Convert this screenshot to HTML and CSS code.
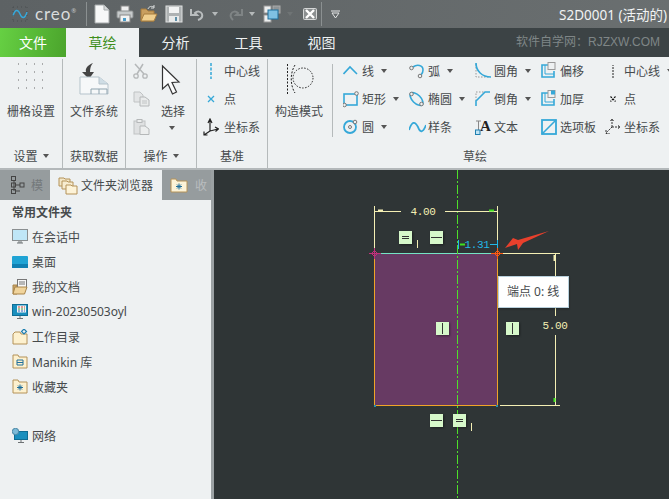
FILE: index.html
```html
<!DOCTYPE html>
<html lang="zh-CN">
<head>
  <meta charset="UTF-8">
  <title>S2D0001 (活动的)</title>
  <link rel="stylesheet" href="styles.css">
</head>
<body>

  <!-- 标题栏 -->
  <div class="titlebar">
    <div class="logo">
      <svg class="logo-wave" viewBox="0 0 16 16">
        <path d="M1 10C3 3 6 3 8 8S13 13 15 6" fill="none" stroke="#35a9dc" stroke-width="1.4"/>
        <path d="M1 1H15M1 15H15M1 1V15M15 1V15" fill="none" stroke="#4a4f51" stroke-dasharray="1 3"/>
      </svg>
      <span class="logo-text">creo</span><span class="logo-mark">®</span>
    </div>
    <div class="bar-sep"></div>
    <svg class="qa" width="16" height="20" viewBox="0 0 16 20"><path d="M1 1H10L15 6V19H1Z" fill="#f7f8f8" stroke="#a5a9aa"/><path d="M10 1V6H15" fill="#d5d8d9" stroke="#a5a9aa"/></svg>
    <svg class="qa" width="18" height="18" viewBox="0 0 18 18"><rect x="5" y="1" width="8" height="6" fill="#eee" stroke="#888"/><rect x="1" y="6" width="16" height="7" rx="1" fill="#c6cacb" stroke="#8b8f90"/><rect x="4" y="10" width="10" height="7" fill="#f2f3f3" stroke="#888"/><rect x="7" y="13" width="3" height="3" fill="#4b9cc8"/></svg>
    <svg class="qa" width="18" height="18" viewBox="0 0 18 18"><path d="M1 4H6L8 6H14V16H1Z" fill="#c99f5f" stroke="#a67c3e"/><path d="M4 9H17L14 16H1Z" fill="#f0cf8e" stroke="#a67c3e"/><path d="M8 4C9 1 12 1 14 2M14 0V3H11" fill="none" stroke="#d9dcdc"/></svg>
    <svg class="qa ml1" width="18" height="18" viewBox="0 0 18 18"><rect x="1" y="1" width="16" height="16" fill="#aeb2b3" stroke="#dfe1e1"/><rect x="4" y="2" width="10" height="6" fill="#f2f3f3"/><rect x="4" y="11" width="10" height="6" fill="#e8eaea"/><rect x="10" y="12" width="2" height="4" fill="#5e8fa8"/></svg>
    <svg class="qa" width="17" height="16" viewBox="0 0 17 16"><path d="M2 3V9H8L6 7C8 5 12 5 13 8C14 11 12 13 9 14" fill="none" stroke="#b9bdbe" stroke-width="2"/></svg>
    <span class="caret caret-light"></span>
    <svg class="qa ml3" width="16" height="16" viewBox="0 0 16 16"><path d="M15 3V9H9L11 7C9 5 5 5 4 8C3 10 4 12 6 14" fill="none" stroke="#7f8485" stroke-width="2"/></svg>
    <span class="caret caret-light"></span>
    <svg class="qa ml2" width="18" height="18" viewBox="0 0 18 18"><rect x="1" y="1" width="7" height="7" fill="#eceeee" stroke="#999"/><rect x="10" y="1" width="7" height="7" fill="#8f9496" stroke="#aaa"/><rect x="1" y="10" width="7" height="7" fill="#eceeee" stroke="#999"/><rect x="5" y="5" width="10" height="9" fill="#7fc0e2" stroke="#1f6f9c"/></svg>
    <span class="caret caret-dim"></span>
    <svg class="qa ml4" width="14" height="14" viewBox="0 0 14 14"><rect x="0.5" y="1.5" width="13" height="11" rx="1" fill="#8b8f90" stroke="#d5d7d7"/><path d="M3 3L11 11M11 3L3 11" stroke="#fff" stroke-width="2.4"/></svg>
    <div class="bar-sep sep-end"></div>
    <svg class="customize" width="9" height="9" viewBox="0 0 9 9"><path d="M0 1H9" stroke="#e4e6e6"/><path d="M1 3H8L4.500 8Z" fill="none" stroke="#e4e6e6"/></svg>
    <div class="doc-title">S2D0001 (活动的)</div>
  </div>

  <!-- 选项卡 -->
  <div class="tabs">
    <div class="tab tab-file">文件</div>
    <div class="tab tab-active">草绘</div>
    <div class="tab">分析</div>
    <div class="tab">工具</div>
    <div class="tab">视图</div>
    <div class="tabs-note">软件自学网：RJZXW.COM</div>
  </div>

  <!-- 功能区 -->
  <div class="ribbon">

    <div class="group group-setup">
      <div class="big">
        <div class="big-slot">
          <svg width="30" height="30" viewBox="0 0 30 30">
            <path d="M2 2H28M2 10H28M2 18H28M2 26H28" stroke="#666" stroke-dasharray="1 7" fill="none"/>
          </svg>
        </div>
        <span>栅格设置</span>
      </div>
      <div class="group-label">设置<span class="caret"></span></div>
    </div>

    <div class="group group-data">
      <div class="big">
        <div class="big-slot">
          <svg width="30" height="36" viewBox="0 0 30 36">
            <path d="M14 1C9 3 6 6 7 10H3L10 17L15 10H11C11 6 12 3 14 1Z" fill="#444"/>
            <path d="M1 15H20L29 22V32H1Z" fill="#f6f8f9" stroke="#b5c3cb"/>
            <path d="M20 15V22H29" fill="#cfdde5" stroke="#b5c3cb"/>
            <path d="M12 32V27H28V32M20 27V32" fill="none" stroke="#8ea3ae"/>
          </svg>
        </div>
        <span>文件系统</span>
      </div>
      <div class="group-label">获取数据</div>
    </div>

    <div class="group group-ops">
      <div class="ops-row">
        <div class="ops-icons">
          <svg width="15" height="16" viewBox="0 0 15 16"><path d="M2 1L11 11M10 1L4 11" stroke="#b5b8b9" stroke-width="1.500" fill="none"/><circle cx="3" cy="13" r="2.200" fill="none" stroke="#b5b8b9" stroke-width="1.300"/><circle cx="12" cy="13" r="2.200" fill="none" stroke="#b5b8b9" stroke-width="1.300"/></svg>
          <svg width="17" height="16" viewBox="0 0 17 16"><path d="M1 1H7L10 4V11H1Z" fill="#e3e5e6" stroke="#c0c3c4"/><path d="M7 6H12L16 9V15H7Z" fill="#e9ebeb" stroke="#b5b8b9"/><path d="M9 10H14M9 12H14" stroke="#c0c3c4"/></svg>
          <svg width="17" height="16" viewBox="0 0 17 16"><rect x="1" y="2" width="11" height="13" fill="#dfe1e2" stroke="#c0c3c4"/><rect x="4" y="0.500" width="5" height="3" fill="#eceeee" stroke="#b5b8b9"/><path d="M7 7H12L16 10V15.500H7Z" fill="#eceeee" stroke="#b5b8b9"/></svg>
        </div>
        <div class="big big-select">
          <div class="big-slot">
            <svg width="24" height="34" viewBox="0 0 24 34">
              <path d="M1.500 4L1.500 27L7 22L11.500 32L15.500 30L11 20.500L18 20Z" fill="#fafbfb" stroke="#333" stroke-width="1.200"/>
            </svg>
          </div>
          <span>选择</span>
          <span class="caret caret-select"></span>
        </div>
      </div>
      <div class="group-label">操作<span class="caret"></span></div>
    </div>

    <div class="group group-datum">
      <div class="rows">
        <div class="row">
          <svg width="16" height="16" viewBox="0 0 16 16"><path d="M8 0V16" stroke="#35a8d8" stroke-width="1.500" stroke-dasharray="3 1.500"/></svg>
          <span>中心线</span>
        </div>
        <div class="row">
          <svg width="16" height="16" viewBox="0 0 16 16"><path d="M5 5L11 11M11 5L5 11" stroke="#35a8d8" stroke-width="1.300"/></svg>
          <span>点</span>
        </div>
        <div class="row">
          <svg width="16" height="18" viewBox="0 0 16 18"><path d="M7 13V2M5 5L7 1L9 5M7 13L15 11M12 9L15.500 11L12.500 13.500M7 13L1 17M1 13.500V17H4.500" fill="none" stroke="#222" stroke-width="1.200"/></svg>
          <span>坐标系</span>
        </div>
      </div>
      <div class="group-label">基准</div>
    </div>

    <div class="group group-sketch">
      <div class="sketch-body">
        <div class="big big-mode">
          <div class="big-slot">
            <svg width="28" height="30" viewBox="0 0 28 30">
              <path d="M1.500 0V30" stroke="#222" stroke-dasharray="2 1.500"/>
              <path d="M9 1C4 9 4 21 9 29" fill="none" stroke="#222" stroke-dasharray="2 1.500"/>
              <circle cx="17" cy="14" r="10" fill="none" stroke="#222" stroke-dasharray="1.500 1.500"/>
            </svg>
          </div>
          <span>构造模式</span>
        </div>
        <div class="tools">
          <div class="row">
            <svg width="17" height="18" viewBox="0 0 17 18"><path d="M0.500 12L7 5L14 12" fill="none" stroke="#35a8d8" stroke-width="1.600"/></svg>
            <span>线</span><span class="caret"></span>
          </div>
          <div class="row">
            <svg width="17" height="18" viewBox="0 0 17 18"><path d="M4 5C8 2 14 3 14 8C14 10 13 12 12 13" fill="none" stroke="#35a8d8" stroke-width="1.600"/><circle cx="2.500" cy="6" r="1.800" fill="#eef1f2" stroke="#777"/><circle cx="11" cy="14" r="1.800" fill="#eef1f2" stroke="#777"/></svg>
            <span>弧</span><span class="caret"></span>
          </div>
          <div class="row">
            <svg width="17" height="18" viewBox="0 0 17 18"><path d="M1 2V15H15" fill="none" stroke="#999" stroke-dasharray="1.500 1.500"/><path d="M1 1C1 9 7 15 16 15" fill="none" stroke="#35a8d8" stroke-width="1.700"/></svg>
            <span>圆角</span><span class="caret"></span>
          </div>
          <div class="row">
            <svg width="17" height="18" viewBox="0 0 17 18"><path d="M7 3H1V15H13V9" fill="none" stroke="#35a8d8" stroke-width="1.600"/><path d="M4 3V12H13" fill="none" stroke="#35a8d8"/><rect x="7" y="0.500" width="7" height="7" fill="#eef1f2" stroke="#999"/></svg>
            <span>偏移</span>
          </div>
          <div class="row">
            <svg width="17" height="18" viewBox="0 0 17 18"><path d="M1 14V1" stroke="#222" stroke-dasharray="2 1" transform="translate(7 2)"/></svg>
            <span>中心线</span><span class="caret"></span>
          </div>

          <div class="row">
            <svg width="17" height="18" viewBox="0 0 17 18"><rect x="1" y="4" width="13" height="11" fill="none" stroke="#35a8d8" stroke-width="1.600"/><circle cx="13.500" cy="3.500" r="1.800" fill="#eef1f2" stroke="#777"/><circle cx="1.500" cy="15" r="1.800" fill="#eef1f2" stroke="#777"/></svg>
            <span>矩形</span><span class="caret"></span>
          </div>
          <div class="row">
            <svg width="17" height="18" viewBox="0 0 17 18"><ellipse cx="7.500" cy="9" rx="8" ry="4.200" transform="rotate(45 7.500 9)" fill="none" stroke="#35a8d8" stroke-width="1.600"/><circle cx="2.500" cy="4" r="1.800" fill="#eef1f2" stroke="#777"/><circle cx="12.500" cy="14" r="1.800" fill="#eef1f2" stroke="#777"/></svg>
            <span>椭圆</span><span class="caret"></span>
          </div>
          <div class="row">
            <svg width="17" height="18" viewBox="0 0 17 18"><path d="M1 11V2H10" fill="none" stroke="#999" stroke-dasharray="1.500 1.500"/><path d="M1 16V11L10 2H15" fill="none" stroke="#35a8d8" stroke-width="1.600"/></svg>
            <span>倒角</span><span class="caret"></span>
          </div>
          <div class="row">
            <svg width="17" height="18" viewBox="0 0 17 18"><path d="M7 3H1V15H13V9" fill="none" stroke="#35a8d8" stroke-width="1.600"/><path d="M4 3V12H13" fill="none" stroke="#35a8d8"/><rect x="7" y="0.500" width="7" height="7" fill="#eef1f2" stroke="#999"/><rect x="10" y="0.500" width="4" height="4" fill="#35a8d8"/></svg>
            <span>加厚</span>
          </div>
          <div class="row">
            <svg width="17" height="18" viewBox="0 0 17 18"><path d="M5.500 6.500L10.500 11.500M10.500 6.500L5.500 11.500" stroke="#111" stroke-width="1.200" stroke-dasharray="2 1"/></svg>
            <span>点</span>
          </div>

          <div class="row">
            <svg width="17" height="18" viewBox="0 0 17 18"><circle cx="7" cy="9" r="6" fill="none" stroke="#35a8d8" stroke-width="1.800"/><circle cx="7" cy="9" r="1.500" fill="#eef1f2" stroke="#777"/><circle cx="12" cy="4" r="1.800" fill="#eef1f2" stroke="#777"/></svg>
            <span>圆</span><span class="caret"></span>
          </div>
          <div class="row">
            <svg width="17" height="18" viewBox="0 0 17 18"><path d="M0 12C3 3 6 3 9 9C11 15 14 15 17 7" fill="none" stroke="#35a8d8" stroke-width="1.800"/></svg>
            <span>样条</span>
          </div>
          <div class="row">
            <svg width="17" height="18" viewBox="0 0 17 18"><path d="M1 3H6M3.500 3V12" stroke="#888"/><text class="icon-a" x="5" y="13">A</text><rect x="0.500" y="12" width="4.500" height="4.500" fill="#bfe4f5" stroke="#1f7fb0"/></svg>
            <span>文本</span>
          </div>
          <div class="row">
            <svg width="17" height="18" viewBox="0 0 17 18"><rect x="1" y="2" width="14" height="14" fill="none" stroke="#35a8d8" stroke-width="1.800"/><path d="M1 16L15 2" stroke="#35a8d8" stroke-width="1.600"/></svg>
            <span>选项板</span>
          </div>
          <div class="row">
            <svg width="17" height="18" viewBox="0 0 17 18"><path d="M7 9V1M5.500 3L7 1L8.500 3M7 9H15M13 7.500L15 9L13 10.500M7 9L1 15M1 12V15.500H4.500" fill="none" stroke="#333" stroke-dasharray="2 1"/></svg>
            <span>坐标系</span>
          </div>
        </div>
      </div>
      <div class="group-label">草绘</div>
    </div>
  </div>

  <!-- 主区域 -->
  <div class="main">
    <div class="sidebar">
      <div class="side-tabs">
        <div class="side-tab side-tab-model">
          <svg width="14" height="19" viewBox="0 0 14 19"><path d="M3 5V15M5 9H9M5 15H9" stroke="#444"/><rect x="0.500" y="0.500" width="4" height="4" fill="none" stroke="#444"/><rect x="0.500" y="7" width="4" height="4" fill="none" stroke="#444"/><rect x="0.500" y="13.500" width="4" height="4" fill="none" stroke="#444"/><rect x="9" y="7" width="4" height="4" fill="none" stroke="#444"/></svg>
          <span>模</span>
        </div>
        <div class="side-tab side-tab-active">
          <svg width="20" height="19" viewBox="0 0 20 19"><path d="M1 2H6L7 3H12V10H1Z" fill="#f3e7c8" stroke="#b49258"/><path d="M4 5H9L10 6H15V13H4Z" fill="#f7ecd0" stroke="#b49258"/><path d="M8 9H13L14 10H19V18H8Z" fill="#fdf3d8" stroke="#b49258"/></svg>
          <span>文件夹浏览器</span>
        </div>
        <div class="side-tab side-tab-fav">
          <svg width="18" height="15" viewBox="0 0 18 15"><path d="M1 1H6L7 3H17V14H1Z" fill="#fdf3d8" stroke="#b49258"/><path d="M6 8.500H12M9 5.500V11.500M7 6.500L11 10.500M11 6.500L7 10.500" stroke="#1f6f9c"/></svg>
          <span>收</span>
        </div>
      </div>
      <div class="side-list">
        <div class="side-title">常用文件夹</div>
        <div class="side-row">
          <svg width="16" height="15" viewBox="0 0 16 15"><rect x="0.500" y="0.500" width="15" height="11" fill="#bfe6f7" stroke="#8a8f91"/><path d="M5 14H11M7 12V14M9 12V14" stroke="#6d7274"/></svg>
          <span>在会话中</span>
        </div>
        <div class="side-row">
          <svg width="16" height="12" viewBox="0 0 16 12"><rect width="16" height="12" rx="1" fill="#1fa3d4"/><rect y="8" width="16" height="4" fill="#0f7fb2"/></svg>
          <span>桌面</span>
        </div>
        <div class="side-row">
          <svg width="16" height="16" viewBox="0 0 16 16"><path d="M1 6H5V15H1Z" fill="#c9a468" stroke="#a9854a"/><rect x="5.500" y="0.500" width="9" height="9" fill="#f7f7f7" stroke="#777"/><path d="M7 3H13M7 5H13" stroke="#777"/><path d="M3 8H15L12.500 15H1Z" fill="#f0d49c" stroke="#a9854a"/></svg>
          <span>我的文档</span>
        </div>
        <div class="side-row">
          <svg width="16" height="16" viewBox="0 0 16 16"><rect x="0.500" y="0.500" width="15" height="11" fill="#1a8fbe" stroke="#0f6d94"/><rect x="5" y="1.500" width="9" height="7" fill="#f3f3f3"/><path d="M6 3H8M9 3H11M12 3H13" stroke="#d04030"/><path d="M6 5H8M9 5H11M12 5H13" stroke="#3f9a3f"/><path d="M6 7H8M9 7H11M12 7H13" stroke="#3060c0"/><path d="M5 14.500H11M8 12V14" stroke="#6d7274"/></svg>
          <span>win-20230503oyl</span>
        </div>
        <div class="side-row">
          <svg width="16" height="16" viewBox="0 0 16 16"><path d="M1 5V15H15V5H9L8 3H3Z" fill="#fdf1cf" stroke="#b49258"/><path d="M12 0L14.500 2.500L12 5L9.500 2.500Z" fill="#eef1f2" stroke="#1f7fb0" stroke-width="1.200"/></svg>
          <span>工作目录</span>
        </div>
        <div class="side-row">
          <svg width="16" height="15" viewBox="0 0 16 15"><path d="M1 1H6L7 3H15V14H1Z" fill="#fdf1cf" stroke="#b49258"/><path d="M5 6H11V11H5ZM5 8.500H11" fill="none" stroke="#1f6f9c"/></svg>
          <span>Manikin 库</span>
        </div>
        <div class="side-row">
          <svg width="16" height="15" viewBox="0 0 16 15"><path d="M1 1H6L7 3H15V14H1Z" fill="#fdf1cf" stroke="#b49258"/><path d="M5 8.500H11M8 5.500V11.500M6 6.500L10 10.500M10 6.500L6 10.500" stroke="#1f6f9c"/></svg>
          <span>收藏夹</span>
        </div>
        <div class="side-row side-row-net">
          <svg width="16" height="16" viewBox="0 0 16 16"><rect x="2.500" y="3.500" width="13" height="8" fill="#1a8fbe" stroke="#0f6d94"/><path d="M6 14.500H12M9 12V14" stroke="#6d7274"/><circle cx="3.500" cy="3.500" r="3.200" fill="#7dbbd8" stroke="#4b87a5"/></svg>
          <span>网络</span>
        </div>
      </div>
    </div>
    <div class="side-strip"></div>

    <div class="canvas">
      <svg class="drawing" viewBox="214 170 455 329" width="455" height="329">
        <rect class="part" x="375" y="253.500" width="122" height="152"/>

        <path class="edge-orange" d="M374.500 253V405.500H497.500V253"/>
        <path class="edge-top" d="M378 253.500H494"/>
        <path class="center" d="M457.500 170V499"/>

        <!-- 尺寸 -->
        <path class="dim" d="M374.500 206V253M497.500 206V240M375 211.500H401M445 211.500H497M499 253.500H560M500 405.500H560M555.500 254V316M555.500 335V405"/>
        <text class="dim-text" x="423" y="215">4.00</text>
        <text class="dim-text" x="555" y="329">5.00</text>
        <path class="dim-cyan" d="M458.500 240V249M490 244.500H497M497.500 240V252"/>
        <text class="dim-text dim-text-cyan" x="477" y="248">1.31</text>
        <path class="tick-pale" d="M378 210.500H383"/>
        <path class="tick" d="M489 210.500H494M554.500 398V402M460 244.500H465"/>
        <path class="tick-pale" d="M554.500 255V261"/>

        <!-- 约束 -->
        <g class="tag"><rect x="399" y="231" width="13" height="13"/><path d="M402 236.500H409M402 238.500H409"/></g>
        <path class="dim" d="M417.500 240V248M471.500 423V431"/>
        <g class="tag"><rect x="430" y="231" width="13" height="13"/><path d="M431 237.500H442"/></g>
        <g class="tag"><rect x="436" y="322" width="13" height="13"/><path d="M442.500 323V334"/></g>
        <g class="tag"><rect x="506" y="322" width="13" height="13"/><path d="M512.500 323V334"/></g>
        <g class="tag"><rect x="430" y="414" width="13" height="13"/><path d="M431 420.500H442"/></g>
        <g class="tag"><rect x="453" y="414" width="13" height="13"/><path d="M456 419.500H463M456 421.500H463"/></g>

        <!-- 端点 -->
        <path class="pt-pink" d="M369 253.500H381M374.500 248V259"/>
        <path class="pt-pink" d="M374.500 250.500L377.500 253.500L374.500 256.500L371.500 253.500Z"/>
        <path class="pt-orange" d="M491 253.500H503M497.500 248V259"/>
        <path class="pt-orange" d="M497.500 250.500L500.500 253.500L497.500 256.500L494.500 253.500Z"/>
        <rect class="corner" x="374" y="405" width="2" height="2"/>
        <rect class="corner" x="496" y="405" width="2" height="2"/>

        <!-- 红色箭头 -->
        <path class="arrow" d="M505 248L513 238L518 240L549 231L523 243L518 250L517 244Z"/>
      </svg>
      <div class="tip">端点 0: 线</div>
    </div>
  </div>

</body>
</html>
```

FILE: styles.css
```css
html, body {
  margin: 0;
  padding: 0;
  height: 100%;
  overflow: hidden;
  font-family: "Noto Sans", "Noto Sans CJK SC", sans-serif;
  font-size: 12px;
  color: #464a4c;
  background: #2f3536;
}

svg {
  display: block;
  flex: none;
}

/* 标题栏 */
.titlebar {
  display: flex;
  align-items: center;
  gap: 6px;
  height: 28px;
  background: linear-gradient(to right, #5d6264, #6a6f70);
  white-space: nowrap;
}

.logo {
  display: flex;
  align-items: center;
  box-sizing: border-box;
  width: 80px;
  padding-left: 12px;
}

.logo-wave {
  width: 16px;
  height: 16px;
  margin-right: 7px;
}

.logo-text {
  font-family: "Lato", sans-serif;
  font-size: 17px;
  line-height: 20px;
  letter-spacing: 0.9px;
  color: #d9dcdc;
}

.logo-mark {
  font-size: 6px;
  align-self: flex-start;
  margin-top: 3px;
  color: #c5c8c8;
}

.bar-sep {
  width: 1px;
  height: 24px;
  margin-right: 1px;
  background: #8b9091;
}

.sep-end {
  margin-left: -2px;
}

.ml1 { margin-left: 1px; }
.ml2 { margin-left: 2px; }
.ml3 { margin-left: 3px; }
.ml4 { margin-left: 4px; }

.customize {
  margin-left: 2px;
}

.doc-title {
  margin-left: auto;
  margin-right: 2px;
  font-size: 13.5px;
  color: #f1f3f3;
}

.caret {
  display: inline-block;
  flex: none;
  width: 0;
  height: 0;
  margin-left: 5px;
  vertical-align: middle;
  border-left: 3.5px solid transparent;
  border-right: 3.5px solid transparent;
  border-top: 4px solid #555;
}

.titlebar .caret {
  margin-left: 0;
}

.caret-light {
  border-top-color: #b5b9ba;
}

.caret-dim {
  border-top-color: #6f7475;
}

/* 选项卡 */
.tabs {
  display: flex;
  height: 29px;
  background: #3c4345;
  white-space: nowrap;
}

.tab {
  width: 73px;
  font-size: 14px;
  line-height: 29px;
  text-align: center;
  color: #eef1f2;
}

.tab-file {
  width: 66px;
  color: #fff;
  background: linear-gradient(100deg, #66d043, #4ba42c);
}

.tab-active {
  color: #3f8f1c;
  background: #eef1f2;
}

.tabs-note {
  margin-left: auto;
  margin-right: 9px;
  font-family: "Liberation Sans", "Noto Sans CJK SC", sans-serif;
  line-height: 29px;
  color: #7f8687;
}

/* 功能区 */
.ribbon {
  display: flex;
  box-sizing: border-box;
  height: 113px;
  padding-top: 2px;
  overflow: hidden;
  background: #eef1f2;
  border-bottom: 2px solid #b3b8ba;
  white-space: nowrap;
}

.group {
  display: flex;
  flex: none;
  flex-direction: column;
  box-sizing: border-box;
  border-right: 1px solid #b5babb;
}

.group-setup { width: 63px; }
.group-data { width: 63px; }
.group-ops { width: 71px; }
.group-datum { width: 71px; }

.group-sketch {
  width: 414px;
  border-right: none;
}

.group-label {
  display: flex;
  align-items: center;
  justify-content: center;
  height: 22px;
  margin-top: auto;
  margin-bottom: 1px;
}

.big {
  display: flex;
  flex-direction: column;
  align-items: center;
  padding-top: 2px;
  line-height: 18px;
}

.big-slot {
  box-sizing: border-box;
  height: 42px;
  padding-top: 1px;
}

.ops-row {
  display: flex;
}

.ops-icons {
  display: flex;
  flex-direction: column;
  gap: 12px;
  padding: 4px 0 0 7px;
  width: 28px;
  box-sizing: border-box;
}

.big-select {
  margin-left: 7px;
  align-items: flex-start;
}

.caret-select {
  margin: 5px 0 0 8px;
}

.rows {
  display: grid;
  grid-auto-rows: 24px;
  gap: 4px;
  padding-left: 6px;
}

.row {
  display: flex;
  align-items: center;
  gap: 5px;
}

.sketch-body {
  display: flex;
}

.big-mode {
  box-sizing: border-box;
  width: 65px;
  height: 73px;
  margin-top: 5px;
  padding: 0 0 0 7px;
  align-items: flex-start;
  border-right: 1px solid #b5babb;
}

.big-mode .big-slot {
  height: 39px;
  padding: 0 0 0 11px;
}

.tools {
  display: grid;
  grid-template-columns: 66px 66px 66px 64px auto;
  grid-auto-rows: 24px;
  gap: 4px 0;
  padding-left: 10px;
}

.tools .row {
  gap: 2px;
}

.icon-a {
  font-family: "Liberation Serif", serif;
  font-size: 15px;
  font-weight: bold;
  fill: #222;
}

/* 主区域 */
.main {
  display: flex;
  height: 329px;
}

.sidebar {
  width: 211px;
  flex: none;
  background: #eef1f2;
}

.side-strip {
  width: 3px;
  flex: none;
  background: #9ba1a3;
}

.side-tabs {
  display: flex;
  height: 30px;
  background: #969c9e;
  white-space: nowrap;
}

.side-tab {
  display: flex;
  align-items: center;
  box-sizing: border-box;
  overflow: hidden;
}

.side-tab-model {
  width: 50px;
  gap: 6px;
  padding-left: 11px;
  color: #74797b;
}

.side-tab-active {
  width: 112px;
  gap: 3px;
  padding-left: 8px;
  background: #eef1f2;
}

.side-tab-fav {
  width: 49px;
  gap: 7px;
  padding-left: 8px;
  color: #b9bdbe;
}

.side-list {
  padding: 1px 0 0 12px;
}

.side-title {
  height: 23px;
  line-height: 23px;
  font-weight: bold;
}

.side-row {
  display: flex;
  align-items: center;
  gap: 4px;
  height: 25px;
}

.side-row svg {
  width: 16px;
}

.side-row-net {
  margin-top: 24px;
}

/* 绘图区 */
.canvas {
  position: relative;
  flex: 1;
  background: #2f3536;
}

.part { fill: #673a63; }

.edge-orange {
  fill: none;
  stroke: #f0a428;
}

.edge-top {
  stroke: #74e4c4;
}

.center {
  stroke: #4ee02a;
  stroke-dasharray: 9 2 2 2;
}

.dim {
  fill: none;
  stroke: #f4efb4;
}

.dim-text {
  font-family: "Liberation Mono", monospace;
  font-size: 11px;
  letter-spacing: -0.4px;
  text-anchor: middle;
  fill: #f4efb4;
}

.dim-text-cyan {
  fill: #22b8e8;
}

.dim-cyan {
  fill: none;
  stroke: #22b8e8;
}

.tick-pale {
  stroke: #f4efb4;
  stroke-width: 2;
}

.tick {
  stroke: #3fe020;
  stroke-width: 2;
}

.tag rect {
  fill: #d6f8ca;
  filter: drop-shadow(1px 1px 1px rgba(0, 0, 0, 0.4));
}

.tag path {
  stroke: #333;
  fill: none;
}

.pt-pink {
  fill: none;
  stroke: #c0307a;
}

.pt-orange {
  fill: none;
  stroke: #ff5a10;
}

.corner { fill: #2a8fa8; }

.arrow { fill: #e8402c; }

.tip {
  position: absolute;
  left: 284px;
  top: 106px;
  box-sizing: border-box;
  width: 71px;
  height: 32px;
  padding-left: 8px;
  line-height: 30px;
  color: #464a4c;
  background: #fff;
  border: 1px solid #b8d0dc;
  box-shadow: 0 1px 2px rgba(0, 0, 0, 0.3);
}
```
